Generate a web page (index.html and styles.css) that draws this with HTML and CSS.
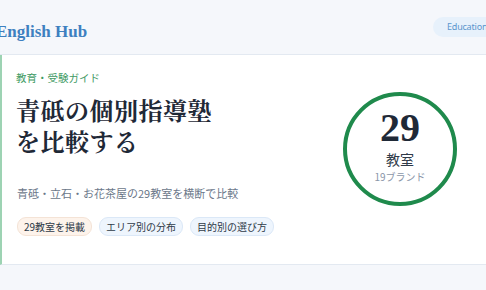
FILE: index.html
```html
<!DOCTYPE html>
<html lang="ja">
<head>
    <meta charset="UTF-8">
    <meta name="viewport" content="width=device-width, initial-scale=1.0">
    <title>English Hub - 青砥の個別指導塾を比較する</title>
    <link rel="stylesheet" href="styles.css">
</head>
<body>
    <div class="page">
        <header class="site-header">
            <div class="brand">English Hub</div>
            <span class="site-tag">Education</span>
        </header>
        <section class="hero">
            <div class="hero-text">
                <div class="eyebrow">教育・受験ガイド</div>
                <h1>青砥の個別指導塾<br>を比較する</h1>
                <p class="lead">青砥・立石・お花茶屋の29教室を横断で比較</p>
                <div class="chips">
                    <span class="chip chip-warm">29教室を掲載</span>
                    <span class="chip">エリア別の分布</span>
                    <span class="chip">目的別の選び方</span>
                </div>
            </div>
            <div class="stat-ring">
                <div class="stat-num">29</div>
                <div class="stat-label">教室</div>
                <div class="stat-sub">19ブランド</div>
            </div>
        </section>
    </div>
</body>
</html>
```

FILE: styles.css
```css
body {
    margin: 0;
    padding: 0;
    background: #f5f7fb;
    font-family: "Noto Sans CJK JP", "Noto Sans", sans-serif;
    overflow: hidden;
}

.page {
    width: 530px;
}

.site-header {
    display: flex;
    align-items: center;
    justify-content: space-between;
    height: 54px;
    padding-right: 29px;
    border-bottom: 1px solid #e3e9f1;
}

.brand {
    margin-left: -4px;
    margin-top: 9px;
    font-family: "Liberation Serif", "DejaVu Serif", serif;
    font-weight: bold;
    font-size: 17px;
    color: #3d80c0;
}

.site-tag {
    display: inline-block;
    width: 40px;
    height: 20px;
    line-height: 20px;
    padding: 0 14px;
    border-radius: 10px;
    background: #e7f1fb;
    color: #5a95cd;
    font-family: "Noto Sans", sans-serif;
    font-size: 9px;
    letter-spacing: -0.2px;
    white-space: nowrap;
}

.hero {
    display: flex;
    justify-content: space-between;
    height: 193px;
    padding: 16px 73px 0 14px;
    background: #ffffff;
    border-left: 2px solid #9dd3b3;
    border-bottom: 1px solid #e3e9f1;
}

.eyebrow {
    font-size: 10.5px;
    line-height: 14px;
    color: #3e9a63;
}

.hero h1 {
    margin: 9px 0 0;
    font-family: "Noto Serif CJK JP", "Noto Sans CJK JP", serif;
    font-weight: bold;
    font-size: 24px;
    letter-spacing: 0.5px;
    line-height: 31px;
    color: #1f2937;
}

.lead {
    margin: 29px 0 0 1px;
    font-size: 11px;
    line-height: 16px;
    color: #6b7789;
}

.chips {
    display: flex;
    gap: 7px;
    margin-top: 16px;
    margin-left: 1px;
}

.chip {
    display: inline-block;
    height: 17px;
    line-height: 17px;
    padding: 0 6px;
    border-radius: 9px;
    border: 1px solid #dbe8f7;
    background: #eef5fd;
    color: #2f3a48;
    font-size: 10px;
}

.chip-warm {
    border-color: #f4e3d6;
    background: #fdf3eb;
}

.stat-ring {
    display: flex;
    flex-direction: column;
    align-items: center;
    box-sizing: border-box;
    width: 114px;
    height: 114px;
    margin-top: 21px;
    padding-top: 11px;
    border: 4px solid #1f8a4c;
    border-radius: 50%;
}

.stat-num {
    font-family: "Liberation Serif", "DejaVu Serif", serif;
    font-weight: bold;
    font-size: 40px;
    line-height: 42px;
    color: #1f2937;
}

.stat-label {
    margin-top: 1px;
    font-size: 14px;
    line-height: 18px;
    color: #2f3a48;
}

.stat-sub {
    margin-top: 3px;
    font-size: 10px;
    line-height: 12px;
    color: #8a96a8;
}
```
